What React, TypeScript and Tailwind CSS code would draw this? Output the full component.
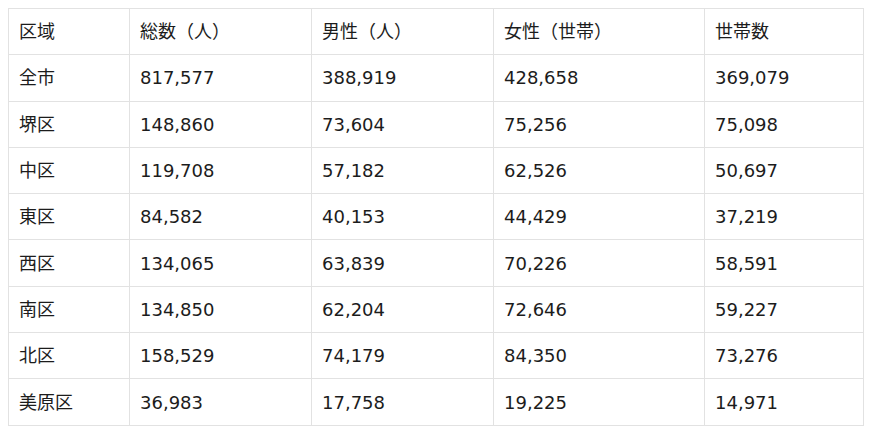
const header = ["区域", "総数（人）", "男性（人）", "女性（世帯）", "世帯数"];

const rows = [
  ["全市", "817,577", "388,919", "428,658", "369,079"],
  ["堺区", "148,860", "73,604", "75,256", "75,098"],
  ["中区", "119,708", "57,182", "62,526", "50,697"],
  ["東区", "84,582", "40,153", "44,429", "37,219"],
  ["西区", "134,065", "63,839", "70,226", "58,591"],
  ["南区", "134,850", "62,204", "72,646", "59,227"],
  ["北区", "158,529", "74,179", "84,350", "73,276"],
  ["美原区", "36,983", "17,758", "19,225", "14,971"],
];

const widths = ["w-[121px]", "w-[182px]", "w-[182px]", "w-[211px]", "w-[159px]"];

export default function App() {
  return (
    <main
      className="w-[870px] h-[432px] bg-white p-2 text-[#1c1c1c] text-[18px]"
      style={{ fontFamily: '"DejaVu Sans", "Noto Sans CJK JP", sans-serif' }}
    >
      <table className="border-collapse table-fixed w-[855px]">
        <thead>
          <tr>
            {header.map((h, i) => (
              <th
                key={h}
                className={`${widths[i]} h-[46.3px] border border-[#e2e2e2] px-[10px] text-left font-normal align-middle`}
              >
                {h}
              </th>
            ))}
          </tr>
        </thead>
        <tbody>
          {rows.map((r) => (
            <tr key={r[0]}>
              {r.map((c, i) => (
                <td
                  key={i}
                  className="h-[46.3px] border border-[#e2e2e2] px-[10px] align-middle"
                >
                  {c}
                </td>
              ))}
            </tr>
          ))}
        </tbody>
      </table>
    </main>
  );
}
